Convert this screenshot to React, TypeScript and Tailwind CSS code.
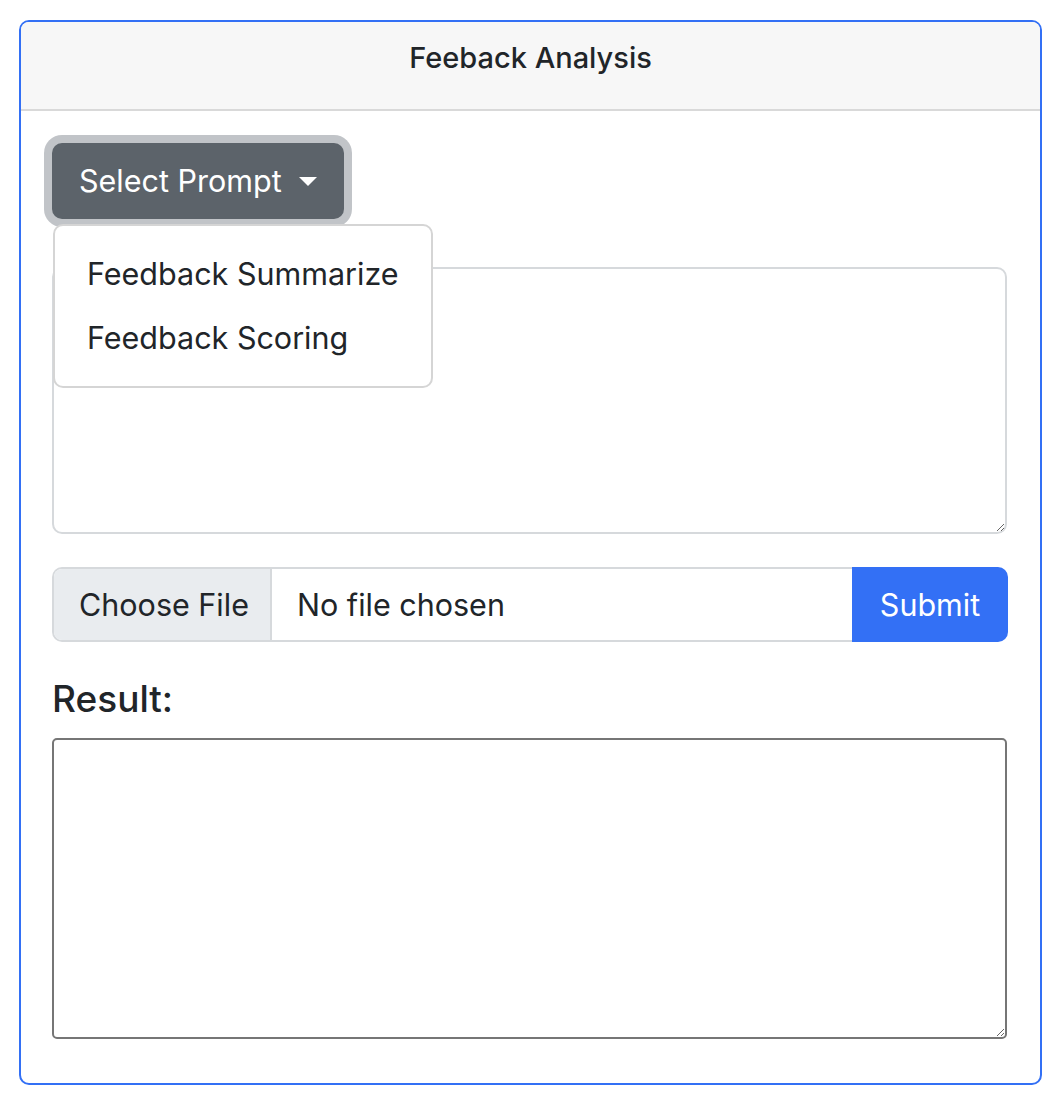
import React from 'react';

const font = { fontFamily: 'Inter, "Liberation Sans", sans-serif' };

export default function App() {
  return (
    <div className="min-h-screen bg-white pt-[20px] pl-[19px] text-[#212529]" style={font}>
      <div className="w-[1023px] border-2 border-[#3370f5] rounded-[10px] overflow-hidden">
        {/* Card header */}
        <div className="h-[89px] bg-[#f7f7f7] border-b-2 border-[#d9d9d9] pt-[12px] text-center">
          <h5 className="text-[29px] leading-[48px] font-medium">Feeback Analysis</h5>
        </div>

        {/* Card body */}
        <div className="pl-[31px] pr-[33px] pt-[32px] pb-[44px]">
          {/* Prompt dropdown */}
          <div className="relative inline-block">
            <button className="h-[76px] px-[27px] flex items-center rounded-[10px] bg-[#5c636a] text-white text-[30.5px] leading-[48px] shadow-[0_0_0_8px_#c1c4c8]">
              Select Prompt
              <span className="ml-[17px] w-0 h-0 border-t-[9px] border-t-white border-x-[9px] border-x-transparent" />
            </button>
            <ul className="absolute left-[1px] top-[calc(100%+5px)] z-10 bg-white border-2 border-[#d5d5d5] rounded-[10px] py-[16px] whitespace-nowrap">
              <li className="px-[32px] h-[64px] leading-[64px] text-[30.5px]">Feedback Summarize</li>
              <li className="px-[32px] h-[64px] leading-[64px] text-[30.5px]">Feedback Scoring</li>
            </ul>
          </div>

          <textarea className="block mt-[48px] w-full h-[267px] border-2 border-[#d6d9dc] rounded-[10px] outline-none" />

          {/* File input group */}
          <div className="mt-[33px] h-[75px] flex">
            <div className="flex flex-1 border-2 border-r-0 border-[#d6d9dc] rounded-l-[10px] overflow-hidden">
              <div className="w-[218px] bg-[#e9ecef] border-r-2 border-[#d6d9dc] flex items-center pl-[25px] text-[30.5px]">
                Choose File
              </div>
              <div className="flex items-center pl-[25px] text-[30.5px]">No file chosen</div>
            </div>
            <button className="w-[156px] -mr-[1px] bg-[#3370f5] text-white text-[30.5px] rounded-r-[10px]">Submit</button>
          </div>

          <h5 className="mt-[33px] text-[37px] leading-[48px] font-medium">Result:</h5>
          <textarea className="block mt-[15px] w-full h-[301px] border-2 border-[#767676] rounded-[5px] outline-none" />
        </div>
      </div>
    </div>
  );
}
